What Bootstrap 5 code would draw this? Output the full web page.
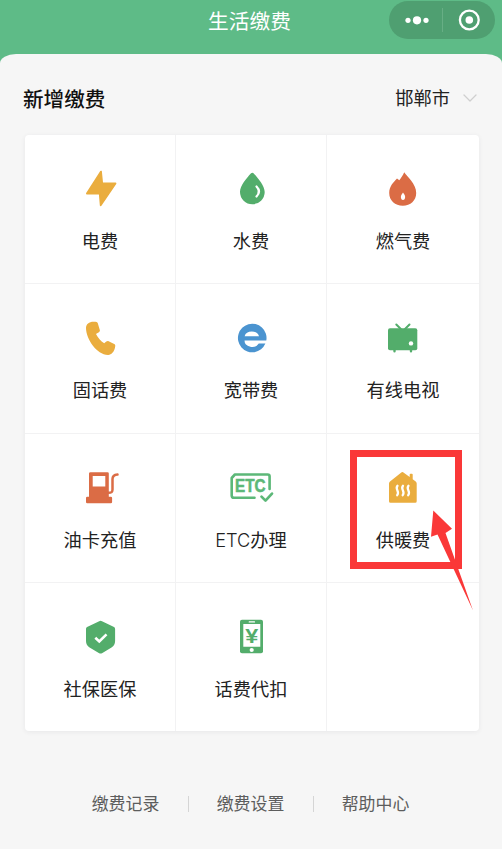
<!DOCTYPE html>
<html lang="zh-CN">
<head>
<meta charset="utf-8">
<meta name="viewport" content="width=device-width, initial-scale=1">
<title>生活缴费</title>
<link href="https://cdn.jsdelivr.net/npm/bootstrap@5.3.0/dist/css/bootstrap.min.css" rel="stylesheet">
<style>
  body { background: #5ebb87; font-family: "Inter", "Noto Sans CJK SC", sans-serif; color: #222; height: 849px; overflow: hidden; }
  .topbar { height: 54px; }
  .topbar h1 { font: 400 20.7px/40px "Noto Sans CJK SC", sans-serif; padding-right: 3px; }
  .capsule { top: 1px; left: 389px; width: 106px; height: 38px; background: #4f9f71; }
  .sheet { height: 795px; background: #f6f6f6; border-radius: 16px 16px 0 0 / 9px 9px 0 0; padding: 0 23px 0 25px; }
  .sheet-head { height: 81px; padding: 7px 2px 0 0; }
  .sheet-head h2 { font: 500 20.6px/30px "Noto Sans CJK SC", sans-serif; color: #111; margin: 0 0 1px -2px; }
  .city { font-size: 18.3px; line-height: 30px; gap: 13px; }
  .tiles { display: grid; grid-template-columns: 151px 151px 152px; grid-template-rows: 149px 150px 149px 148px; border-radius: 4px; box-shadow: 0 1px 5px rgba(40,40,60,.07); overflow: hidden; }
  .tile { border-right: 1px solid #f2f2f3; border-bottom: 1px solid #f2f2f3; padding-top: 29px; font-size: 18.2px; font-weight: 300; line-height: 28px; color: #222; }
  .tile:nth-child(3n) { border-right: 0; }
  .tile:nth-child(n+10) { border-bottom: 0; }
  .tile svg { width: 50px; height: 50px; margin-bottom: 13px; flex: none; }
  .tile > span { font-family: "Inter", "Noto Sans CJK SC", sans-serif; font-weight: 400; }
  .tile > span > b { font-weight: 300; }
  .y { fill: #eaad3e; } .g { fill: #53ad6b; } .r { fill: #db6c45; }
  .ln { fill: none; stroke-linecap: round; stroke-linejoin: round; }
  .glyph { font-family: "Liberation Sans", sans-serif; font-weight: 700; }
  .links { font-size: 16.9px; line-height: 26px; color: #5d5d5d; padding-top: 60px; margin-left: -3px; }
  .links a { width: 125px; color: inherit; }
  .links a + a { background: linear-gradient(#d5d5d5, #d5d5d5) 0 5px / 1px 16px no-repeat; }
  .marker { top: 0; left: 0; width: 502px; height: 849px; }
</style>
</head>
<body class="position-relative">
<header class="topbar text-center text-white">
  <h1 class="m-0">生活缴费</h1>
  <div class="capsule position-absolute rounded-pill">
    <svg class="d-block" width="106" height="38" viewBox="0 0 106 38" fill="#fff">
      <circle cx="19" cy="19.3" r="2.6"/><circle cx="28" cy="19.3" r="4.1"/><circle cx="37" cy="19.3" r="2.6"/>
      <path d="M53.5 7v24" stroke="#67ae85" stroke-width="1"/>
      <circle cx="80.3" cy="19" r="9.4" fill="none" stroke="#fff" stroke-width="2.3"/><circle cx="80.3" cy="19" r="3.8"/>
    </svg>
  </div>
</header>
<main class="sheet">
  <div class="sheet-head d-flex align-items-center justify-content-between">
    <h2>新增缴费</h2>
    <div class="city d-flex align-items-center">邯郸市
      <svg width="14" height="8" viewBox="0 0 14 8"><path class="ln" d="M1 1l6 6 6-6" stroke="#cfcfcf" stroke-width="1.3"/></svg>
    </div>
  </div>
  <section class="tiles bg-white">
    <div class="tile d-flex flex-column align-items-center">
      <svg viewBox="0 0 50 50"><path class="y" stroke="#eaad3e" stroke-width="1.8" stroke-linejoin="round" d="M26 7.600l1.200 11.800h13.300L25.700 41.200l-1-11.700H11.900z"/></svg><span>电费</span>
    </div>
    <div class="tile d-flex flex-column align-items-center">
      <svg viewBox="0 0 50 50"><path class="g" d="M24.800 9.600q1.500-1.700 3 0C32 14 38.700 22 38.700 28a12.350 12.200 0 0 1-24.700 0c0-6 6.700-14 10.800-18.400z"/><path class="ln" d="M30.500 22.500q5 5 0 10" stroke="#fff" stroke-width="2.300"/></svg><span>水费</span>
    </div>
    <div class="tile d-flex flex-column align-items-center">
      <svg viewBox="0 0 50 50"><path class="r" d="M26.200 8.200C29 12.800 38.200 19.500 38.200 29c0 7.500-5.700 12.700-13.400 12.700S11.200 36.500 11.200 29c0-7 4.800-11.200 7.800-14.500l2.300 1.700c1.700-2.200 3.700-5 4.900-8z"/><path fill="#fff" d="M25 28.500c1.200 1.600 2.100 2.900 2.100 4.500 0 1.900-.8 3-2.100 3s-2.100-1.100-2.100-3c0-1.600.9-2.900 2.100-4.500z"/></svg><span>燃气费</span>
    </div>

    <div class="tile d-flex flex-column align-items-center">
      <svg viewBox="0 0 50 50"><path class="y" d="M11 15c0-4 3-6.300 7.500-6.300 3 0 3.900.4 4.300 1.600l2 6.700c.4 1.300-.2 1.900-3.800 4 2 4 4.700 7 8.200 9.300 2.300-2.100 3.200-2.700 4.400-2.100l5.600 2.800c1.300.7 1.300 1.500.7 4-1 4-3.400 6.700-6.600 6.900C22 42.200 11 26 11 15z"/></svg><span>固话费</span>
    </div>
    <div class="tile d-flex flex-column align-items-center">
      <svg viewBox="0 0 50 50"><path transform="translate(0 .6)" d="M39.400 30A14.300 14.300 0 1 1 40.300 27H18.500a7.600 6.400 0 0 0 14.300 3zM18.600 22.600H33a7.400 6 0 0 0-14.400 0z" fill="#4b94d0"/></svg><span>宽带费</span>
    </div>
    <div class="tile d-flex flex-column align-items-center">
      <svg viewBox="0 0 50 50"><rect class="g" x="10" y="15.300" width="29.300" height="22" rx="2"/><path class="ln" d="M18.300 11.500l4.500 4.500M31.500 11.500L27 16" stroke="#53ad6b" stroke-width="2"/><path class="ln" d="M16.500 37v1.200M33 37v1.200" stroke="#53ad6b" stroke-width="2.400"/><circle cx="33" cy="30.400" r="2.200" fill="#fff"/></svg><span>有线电视</span>
    </div>

    <div class="tile d-flex flex-column align-items-center">
      <svg viewBox="0 0 50 50"><path class="r" fill-rule="evenodd" d="M15.500 9.300h17q1.300 0 1.300 1.300v23.100h2q1.300 0 1.300 1.300v4q0 1.300-1.300 1.300H12.300Q11 40.300 11 39v-4q0-1.300 1.300-1.300H14V10.600q0-1.300 1.500-1.300zM17.700 13v10.500h12.600V13z"/><path class="ln" d="M33.500 29.800c3.200 0 4-.8 4-3.300V16c0-2.500 1.500-4 5-4.400" stroke="#db6c45" stroke-width="2.500"/></svg><span>油卡充值</span>
    </div>
    <div class="tile d-flex flex-column align-items-center">
      <svg viewBox="0 0 50 50"><path class="ln" d="M28.500 34.700H8q-2.300 0-2.300-2.300V15L8.900 11.500H41.600q2 0 2 2V26" stroke="#5cb878" stroke-width="2.600"/><text class="glyph" x="9" y="29.200" font-size="18.500" textLength="30.500" lengthAdjust="spacingAndGlyphs" fill="#5cb878" stroke="#5cb878" stroke-width=".6">ETC</text><path class="ln" d="M35.500 33.600l4 4 6.500-7" stroke="#5cb878" stroke-width="2.700"/></svg><span><b>ETC</b>办理</span>
    </div>
    <div class="tile d-flex flex-column align-items-center">
      <svg viewBox="0 0 50 50"><path class="y" d="M23 9.700q1.400-1.200 2.800 0l5.900 4.300v-2.500q0-.8.8-.8h1.400q.8 0 .8.800v4.700l3 2.200q1 .8 1 2v17.800q0 1.500-1.500 1.500H12.500q-1.500 0-1.500-1.500V20.500q0-1.200 1-2z"/><path class="ln" d="M19.500 22.800c-3 3.700 2.700 5.200-.3 9.400M25 22.800c-3 3.700 2.700 5.200-.3 9.400M30.500 22.800c-3 3.700 2.700 5.200-.3 9.400" stroke="#fff" stroke-width="2.300"/></svg><span>供暖费</span>
    </div>

    <div class="tile d-flex flex-column align-items-center">
      <svg viewBox="0 0 50 50"><path class="g" d="M24.200 9.200q1.400-.8 2.800 0L39 15q1.100.6 1.100 1.900V29q0 4.200-3.600 6.500L27 41.200q-1.400.8-2.800 0l-9.600-5.700Q11 33.200 11 29V16.900q0-1.300 1.100-1.900z"/><path d="M20.300 25.700l4 3.800 7.200-7.200" fill="none" stroke="#fff" stroke-width="2.600"/></svg><span>社保医保</span>
    </div>
    <div class="tile d-flex flex-column align-items-center">
      <svg viewBox="0 0 50 50"><rect class="g" x="14" y="7.700" width="23" height="33.600" rx="2"/><path fill="#fff" d="M17.300 12h17v22.700h-17z"/><path class="ln" d="M23.200 9.900h5.300" stroke="#fff" stroke-width="1.100"/><circle cx="25.700" cy="38" r="2.100" fill="#fff"/><text class="glyph g" x="19.200" y="30.800" font-size="20.500" textLength="13" lengthAdjust="spacingAndGlyphs">¥</text></svg><span>话费代扣</span>
    </div>
    <div class="tile"></div>
  </section>
  <nav class="links d-flex justify-content-center text-center">
    <a class="text-decoration-none">缴费记录</a><a class="text-decoration-none">缴费设置</a><a class="text-decoration-none">帮助中心</a>
  </nav>
</main>
<svg class="marker position-absolute pe-none" viewBox="0 0 502 849"><path d="M353.500 453.500h105v112h-105z" fill="none" stroke="#fa3838" stroke-width="7"/><path d="M433.300 510.500L452 528.700l-6.500 4.300L473 610.500 437.500 534.500l-6.500 2.200z" fill="#fa3838"/></svg>
<script src="https://cdn.jsdelivr.net/npm/bootstrap@5.3.0/dist/js/bootstrap.bundle.min.js"></script>
</body>
</html>
